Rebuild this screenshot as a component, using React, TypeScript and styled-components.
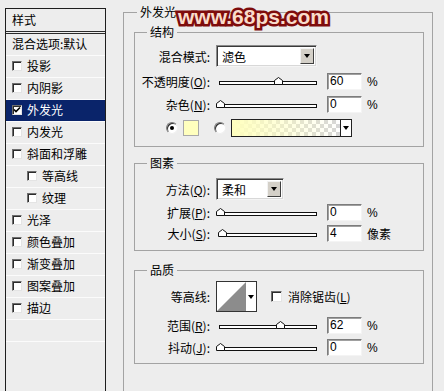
import React from 'react';
import styled, { createGlobalStyle } from 'styled-components';

const GlobalStyle = createGlobalStyle`
  html, body {
    margin: 0;
    padding: 0;
    background: #ededed;
    overflow: hidden;
  }
  body {
    font-family: "Noto Sans CJK SC", "Liberation Sans", sans-serif;
    font-size: 12px;
    color: #000;
  }
`;

const Page = styled.div`
  position: relative;
  display: flex;
  align-items: flex-start;
  width: 444px;
  height: 391px;
  overflow: hidden;
`;

/* ---------- left style list ---------- */

const StyleList = styled.div`
  margin: 8px 0 0 5px;
  width: 101px;
  height: 420px;
  box-sizing: border-box;
  border: 1px solid #1e1e1e;
  background: #ededed;
  flex-shrink: 0;
`;

const ListHeader = styled.div`
  height: 22px;
  line-height: 22px;
  padding-left: 6px;
  border-bottom: 3px double #2a2a2a;
`;

const ListItem = styled.div<{ $active?: boolean; $indent?: number }>`
  display: flex;
  align-items: center;
  gap: 5px;
  height: 19px;
  padding-bottom: 2px;
  padding-left: ${(p) => 6 + (p.$indent || 0)}px;
  border-bottom: 1px solid #fbfbfb;
  background: ${(p) => (p.$active ? '#0a246a' : 'transparent')};
  color: ${(p) => (p.$active ? '#fff' : '#000')};
  white-space: nowrap;
`;

const Check = styled.span<{ $size?: number }>`
  position: relative;
  display: inline-block;
  flex-shrink: 0;
  width: ${(p) => p.$size || 10}px;
  height: ${(p) => p.$size || 10}px;
  box-sizing: border-box;
  background: #fff;
  border: 1px solid;
  border-color: #6e6e6e #e4e4e4 #e4e4e4 #6e6e6e;
  box-shadow: inset 1px 1px 0 #2c2c2c;
`;

const Tick = () => (
  <svg width="8" height="8" viewBox="0 0 8 8" style={{ position: 'absolute', left: 0, top: 0 }}>
    <path d="M1 3.5 L3 5.5 L7 1.5" stroke="#000" strokeWidth="1.6" fill="none" />
  </svg>
);

/* ---------- group boxes ---------- */

const Group = styled.fieldset<{ $w: number; $top: number; $left: number; $h?: number }>`
  margin: ${(p) => p.$top}px 0 0 ${(p) => p.$left}px;
  padding: 0;
  width: ${(p) => p.$w}px;
  ${(p) => (p.$h ? `height: ${p.$h}px;` : '')}
  box-sizing: border-box;
  border: 1px solid #a3a3a3;
  min-inline-size: 0;
  flex-shrink: 0;
`;

const Legend = styled.legend<{ $offset: number }>`
  margin-left: ${(p) => p.$offset}px;
  padding: 0 3px;
  line-height: 14px;
  font-size: 12px;
`;

const Rows = styled.div<{ $pt: number; $pb: number; $gap: number }>`
  display: flex;
  flex-direction: column;
  gap: ${(p) => p.$gap}px;
  padding: ${(p) => p.$pt}px 0 ${(p) => p.$pb}px 0;
`;

const Row = styled.div<{ $h: number }>`
  display: grid;
  grid-template-columns: 75px auto;
  column-gap: 6px;
  align-items: center;
  height: ${(p) => p.$h}px;
`;

const Label = styled.span`
  text-align: right;
  white-space: nowrap;
  u {
    text-decoration: underline;
  }
`;

const Controls = styled.div`
  display: flex;
  align-items: center;
`;

/* ---------- dropdowns ---------- */

const Select = styled.div<{ $w: number }>`
  display: flex;
  align-items: stretch;
  width: ${(p) => p.$w}px;
  height: 22px;
  box-sizing: border-box;
  background: #fff;
  border: 1px solid;
  border-color: #8a8a8a #f4f4f4 #f4f4f4 #8a8a8a;
  box-shadow: inset 1px 1px 0 #3a3a3a, inset -1px -1px 0 #d8d8d8;
  padding: 2px;
`;

const SelectText = styled.span`
  flex: 1;
  padding-left: 3px;
  line-height: 18px;
`;

const SelectButton = styled.span`
  display: flex;
  align-items: center;
  justify-content: center;
  width: 14px;
  background: #d4d0c8;
  border: 1px solid;
  border-color: #f2f2f2 #404040 #404040 #f2f2f2;
  box-sizing: border-box;
`;

const Arrow = styled.span`
  width: 0;
  height: 0;
  border-left: 3px solid transparent;
  border-right: 3px solid transparent;
  border-top: 4px solid #000;
`;

/* ---------- sliders ---------- */

const Slider = styled.div`
  position: relative;
  display: flex;
  align-items: center;
  width: 98px;
  height: 17px;
  margin-left: 3px;
`;

const Track = styled.div`
  width: 100%;
  height: 4px;
  margin-top: 3px;
  box-sizing: border-box;
  background: #fff;
  border: 1px solid #111;
`;

const ThumbWrap = styled.span`
  position: absolute;
  top: 4px;
  width: 9px;
  height: 8px;
  line-height: 0;
`;

const NumBox = styled.div`
  width: 35px;
  height: 17px;
  margin-left: 10px;
  box-sizing: border-box;
  background: #fff;
  border: 1px solid;
  border-color: #7c7c7c #f4f4f4 #f4f4f4 #7c7c7c;
  box-shadow: inset 1px 1px 0 #a0a0a0;
  padding-left: 2px;
  font-family: "Liberation Sans", Arial, sans-serif;
  font-size: 12px;
  line-height: 15px;
`;

const Unit = styled.span`
  margin-left: 5px;
  font-family: "Liberation Sans", "Noto Sans CJK SC", sans-serif;
`;

const UnitCJK = styled.span`
  margin-left: 5px;
`;

/* ---------- colour row ---------- */

const ColorRow = styled.div`
  display: flex;
  align-items: center;
  height: 18px;
  padding-left: 31px;
`;

const Radio = styled.span<{ $on?: boolean }>`
  display: flex;
  align-items: center;
  justify-content: center;
  width: 12px;
  height: 12px;
  box-sizing: border-box;
  border-radius: 50%;
  background: #fff;
  border: 1px solid;
  border-color: #7a7a7a #f0f0f0 #f0f0f0 #7a7a7a;
  box-shadow: inset 1px 1px 0 #303030;
  &::after {
    content: '';
    display: ${(p) => (p.$on ? 'block' : 'none')};
    width: 4px;
    height: 4px;
    border-radius: 50%;
    background: #000;
  }
`;

const Swatch = styled.span`
  width: 16px;
  height: 16px;
  margin-left: 5px;
  box-sizing: border-box;
  border: 1px solid #a9a9a9;
  background: #ffffbe;
`;

const Spacer = styled.span<{ $w: number }>`
  width: ${(p) => p.$w}px;
`;

const GradientBox = styled.div`
  display: flex;
  width: 121px;
  height: 18px;
  margin-left: 5px;
  box-sizing: border-box;
  border: 1px solid #222;
  background: #fff;
`;

const GradientFill = styled.span`
  flex: 1;
  background-color: #fff;
  background-image: linear-gradient(to right, #ffffbe 0%, rgba(255, 255, 190, 0) 100%),
    linear-gradient(45deg, #d6d6d6 25%, transparent 25%, transparent 75%, #d6d6d6 75%),
    linear-gradient(45deg, #d6d6d6 25%, transparent 25%, transparent 75%, #d6d6d6 75%);
  background-size: 100% 100%, 8px 8px, 8px 8px;
  background-position: 0 0, 0 0, 4px 4px;
`;

const GradientArrow = styled.span`
  display: flex;
  align-items: center;
  justify-content: center;
  width: 10px;
  border-left: 1px solid #222;
`;

/* ---------- contour row ---------- */

const ContourBox = styled.div`
  display: flex;
  width: 41px;
  height: 31px;
  box-sizing: border-box;
  border: 1px solid #333;
  background: #fff;
`;

const ContourArrow = styled.span`
  display: flex;
  align-items: center;
  justify-content: center;
  flex: 1;
`;

const CheckLabel = styled.label`
  display: flex;
  align-items: center;
  gap: 6px;
  margin-left: 14px;
  white-space: nowrap;
  u {
    text-decoration: underline;
  }
`;

/* ---------- watermark ---------- */

const Watermark = styled.div`
  position: absolute;
  left: 178px;
  top: 6px;
  font-family: "Liberation Sans", Arial, sans-serif;
  font-weight: bold;
  font-size: 21px;
  line-height: 21px;
  color: #f9dccb;
  -webkit-text-stroke: 5px #7e0c0c;
  paint-order: stroke fill;
  white-space: nowrap;
`;

/* ---------- pieces ---------- */

function Thumb({ pct }: { pct: number }) {
  return (
    <ThumbWrap style={{ left: -3 + pct * 97 }}>
      <svg width="9" height="8" viewBox="0 0 9 8">
        <path d="M0.5 3.5 L4.5 0.5 L8.5 3.5 L8.5 7.5 L0.5 7.5 Z" fill="#fff" stroke="#111" strokeWidth="1" />
      </svg>
    </ThumbWrap>
  );
}

interface SliderRowProps {
  label: React.ReactNode;
  value: number;
  max: number;
  unit: string;
}

function SliderRow({ label, value, max, unit }: SliderRowProps) {
  return (
    <Row $h={17}>
      <Label>{label}</Label>
      <Controls>
        <Slider>
          <Track />
          <Thumb pct={value / max} />
        </Slider>
        <NumBox>{value}</NumBox>
        {unit === '%' ? <Unit>%</Unit> : <UnitCJK>{unit}</UnitCJK>}
      </Controls>
    </Row>
  );
}

function Dropdown({ text, width }: { text: string; width: number }) {
  return (
    <Select $w={width}>
      <SelectText>{text}</SelectText>
      <SelectButton>
        <Arrow />
      </SelectButton>
    </Select>
  );
}

const listItems = [
  { name: '投影' },
  { name: '内阴影' },
  { name: '外发光', active: true, checked: true },
  { name: '内发光' },
  { name: '斜面和浮雕' },
  { name: '等高线', indent: 15 },
  { name: '纹理', indent: 15 },
  { name: '光泽' },
  { name: '颜色叠加' },
  { name: '渐变叠加' },
  { name: '图案叠加' },
  { name: '描边' },
];

export default function App() {
  return (
    <>
      <GlobalStyle />
      <Page>
        <StyleList>
          <ListHeader>样式</ListHeader>
          <ListItem>混合选项:默认</ListItem>
          {listItems.map((item) => (
            <ListItem key={item.name} $active={item.active} $indent={item.indent}>
              <Check>{item.checked && <Tick />}</Check>
              {item.name}
            </ListItem>
          ))}
          <ListItem />
        </StyleList>

        <Group $w={310} $top={5} $left={17} $h={420}>
          <Legend $offset={13}>外发光</Legend>

          <Group $w={290} $top={6} $left={10}>
            <Legend $offset={12}>结构</Legend>
            <Rows $pt={6} $pb={9} $gap={6}>
              <Row $h={22}>
                <Label>混合模式:</Label>
                <Controls>
                  <Dropdown text="滤色" width={101} />
                </Controls>
              </Row>
              <SliderRow label={<>不透明度(<u>O</u>):</>} value={60} max={100} unit="%" />
              <SliderRow label={<>杂色(<u>N</u>):</>} value={0} max={100} unit="%" />
              <ColorRow>
                <Radio $on />
                <Swatch />
                <Spacer $w={15} />
                <Radio />
                <GradientBox>
                  <GradientFill />
                  <GradientArrow>
                    <Arrow />
                  </GradientArrow>
                </GradientBox>
              </ColorRow>
            </Rows>
          </Group>

          <Group $w={290} $top={9} $left={10}>
            <Legend $offset={12}>图素</Legend>
            <Rows $pt={8} $pb={8} $gap={4}>
              <Row $h={22}>
                <Label>方法(<u>Q</u>):</Label>
                <Controls>
                  <Dropdown text="柔和" width={68} />
                </Controls>
              </Row>
              <SliderRow label={<>扩展(<u>P</u>):</>} value={0} max={100} unit="%" />
              <SliderRow label={<>大小(<u>S</u>):</>} value={4} max={250} unit="像素" />
            </Rows>
          </Group>

          <Group $w={290} $top={12} $left={10}>
            <Legend $offset={12}>品质</Legend>
            <Rows $pt={4} $pb={7} $gap={5}>
              <Row $h={31}>
                <Label>等高线:</Label>
                <Controls>
                  <ContourBox>
                    <svg width="29" height="29" viewBox="0 0 29 29">
                      <polygon points="0,29 29,0 29,29" fill="#8c8c8c" />
                    </svg>
                    <ContourArrow>
                      <Arrow />
                    </ContourArrow>
                  </ContourBox>
                  <CheckLabel>
                    <Check $size={11} />
                    <span>
                      消除锯齿(<u>L</u>)
                    </span>
                  </CheckLabel>
                </Controls>
              </Row>
              <SliderRow label={<>范围(<u>R</u>):</>} value={62} max={100} unit="%" />
              <SliderRow label={<>抖动(<u>J</u>):</>} value={0} max={100} unit="%" />
            </Rows>
          </Group>
        </Group>

        <Watermark>www.68ps.com</Watermark>
      </Page>
    </>
  );
}
